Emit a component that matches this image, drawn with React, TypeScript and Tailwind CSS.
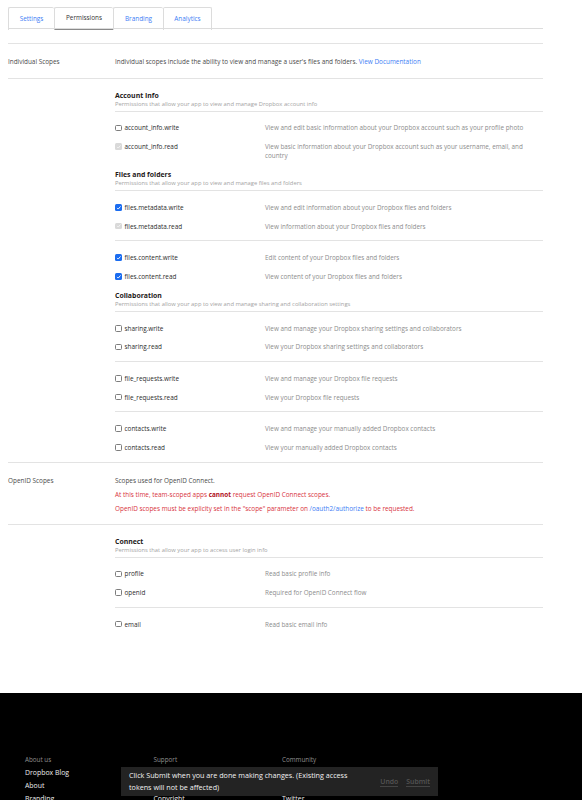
import React from "react";

type Mark = "off" | "on" | "locked";

const groups: {
  title: string;
  sub: string;
  first?: boolean;
  sets: { name: string; desc: string; mark: Mark }[][];
}[] = [
  {
    title: "Account Info",
    sub: "Permissions that allow your app to view and manage Dropbox account info",
    first: true,
    sets: [
      [
        { name: "account_info.write", desc: "View and edit basic information about your Dropbox account such as your profile photo", mark: "off" },
        { name: "account_info.read", desc: "View basic information about your Dropbox account such as your username, email, and country", mark: "locked" },
      ],
    ],
  },
  {
    title: "Files and folders",
    sub: "Permissions that allow your app to view and manage files and folders",
    sets: [
      [
        { name: "files.metadata.write", desc: "View and edit information about your Dropbox files and folders", mark: "on" },
        { name: "files.metadata.read", desc: "View information about your Dropbox files and folders", mark: "locked" },
      ],
      [
        { name: "files.content.write", desc: "Edit content of your Dropbox files and folders", mark: "on" },
        { name: "files.content.read", desc: "View content of your Dropbox files and folders", mark: "on" },
      ],
    ],
  },
  {
    title: "Collaboration",
    sub: "Permissions that allow your app to view and manage sharing and collaboration settings",
    sets: [
      [
        { name: "sharing.write", desc: "View and manage your Dropbox sharing settings and collaborators", mark: "off" },
        { name: "sharing.read", desc: "View your Dropbox sharing settings and collaborators", mark: "off" },
      ],
      [
        { name: "file_requests.write", desc: "View and manage your Dropbox file requests", mark: "off" },
        { name: "file_requests.read", desc: "View your Dropbox file requests", mark: "off" },
      ],
      [
        { name: "contacts.write", desc: "View and manage your manually added Dropbox contacts", mark: "off" },
        { name: "contacts.read", desc: "View your manually added Dropbox contacts", mark: "off" },
      ],
    ],
  },
];

const connect = {
  title: "Connect",
  sub: "Permissions that allow your app to access user login info",
  first: true,
  sets: [
    [
      { name: "profile", desc: "Read basic profile info", mark: "off" as Mark },
      { name: "openid", desc: "Required for OpenID Connect flow", mark: "off" as Mark },
    ],
    [{ name: "email", desc: "Read basic email info", mark: "off" as Mark }],
  ],
};

function Box({ mark }: { mark: Mark }) {
  if (mark === "off") {
    return <span className="w-[6.5px] h-[6.5px] shrink-0 rounded-[1.5px] border-[0.8px] border-[#7d7d7d] bg-white" />;
  }
  const on = mark === "on";
  return (
    <span
      className={
        on
          ? "w-[6.5px] h-[6.5px] shrink-0 rounded-[1.5px] bg-[#1a6cf0] flex items-center justify-center"
          : "w-[6.5px] h-[6.5px] shrink-0 rounded-[1.5px] bg-[#d9d9d9] flex items-center justify-center"
      }
    >
      <svg viewBox="0 0 10 10" className="w-[5.5px] h-[5.5px]">
        <path d="M2 5.3 L4.1 7.4 L8.2 2.6" stroke={on ? "#fff" : "#f4f4f4"} strokeWidth="1.7" fill="none" />
      </svg>
    </span>
  );
}

function Group({ g }: { g: typeof connect }) {
  return (
    <div className={g.first ? "pt-[12px]" : "pt-[0.5px]"}>
      <div className="border-b border-[#e3e3e3] pb-[3px]">
        <div className="text-[6.9px] leading-[10px] font-bold text-[#1e1919]">{g.title}</div>
        <div className="text-[5.8px] leading-[7px] text-[#a3a3a3]">{g.sub}</div>
      </div>
      {g.sets.map((set, i) => {
        const bordered = i < g.sets.length - 1;
        return (
          <div key={i} className={bordered ? "pt-[7px] pb-[5px] border-b border-[#e3e3e3]" : "pt-[7px] pb-[5px]"}>
            {set.map((r) => (
              <div key={r.name} className="flex items-start py-[4.8px] leading-[9px]">
                <div className="w-[150px] shrink-0 flex items-center gap-[3px] h-[9px] text-[6.4px] text-[#2b2b2b]">
                  <Box mark={r.mark} />
                  <span>{r.name}</span>
                </div>
                <div className="w-[272px] text-[6.33px] text-[#8c8c8c]">{r.desc}</div>
              </div>
            ))}
          </div>
        );
      })}
    </div>
  );
}

const tabs = [
  { label: "Settings", w: "w-[46px]", active: false },
  { label: "Permissions", w: "w-[59px]", active: true },
  { label: "Branding", w: "w-[50px]", active: false },
  { label: "Analytics", w: "w-[49px]", active: false },
];

export default function App() {
  return (
    <div className="min-h-[900px] bg-white font-['Open_Sans',sans-serif]">
      <div className="ml-2 w-[535px] pt-[7px]">
        {/* tabs */}
        <div className="flex h-[22px] border-b border-[#dcdcdc]">
          {tabs.map((t, i) => (
            <div
              key={t.label}
              className={
                (t.active
                  ? "border-b-[1.5px] border-b-[#8a8a8a] text-[#333] "
                  : "text-[#3d7df5] ") +
                (i === tabs.length - 1 ? "border-r " : "") +
                t.w +
                " h-[22.5px] border-l border-t border-[#dcdcdc] rounded-t-[2px] flex items-center justify-center text-[6.4px]"
              }
            >
              {t.label}
            </div>
          ))}
        </div>
        <div className="h-[14.5px] border-b border-[#e3e3e3]" />

        {/* individual scopes */}
        <div className="flex pt-[13px] pb-[12px] leading-[9px] text-[6.4px] border-b border-[#e3e3e3]">
          <div className="w-[107px] text-[#4a4a4a]">Individual Scopes</div>
          <div className="text-[#4a4a4a]">
            Individual scopes include the ability to view and manage a user's files and folders.{" "}
            <span className="text-[#3d7df5]">View Documentation</span>
          </div>
        </div>

        <div className="flex border-b border-[#e3e3e3]">
          <div className="w-[107px]" />
          <div className="w-[428px]">
            {groups.map((g) => (
              <Group key={g.title} g={g} />
            ))}
          </div>
        </div>

        {/* openid */}
        <div className="flex pt-[13px] pb-[11px] leading-[9px] text-[6.4px] border-b border-[#e3e3e3]">
          <div className="w-[107px] text-[#4a4a4a]">OpenID Scopes</div>
          <div>
            <p className="text-[#4a4a4a]">Scopes used for OpenID Connect.</p>
            <p className="mt-[5px] text-[#d8323c]">
              At this time, team-scoped apps <span className="font-bold text-[#b0121c]">cannot</span> request OpenID Connect scopes.
            </p>
            <p className="mt-[5px] text-[#d8323c]">
              OpenID scopes must be explicity set in the "scope" parameter on{" "}
              <span className="text-[#3d7df5]">/oauth2/authorize</span> to be requested.
            </p>
          </div>
        </div>

        <div className="flex">
          <div className="w-[107px]" />
          <div className="w-[428px]">
            <Group g={connect} />
          </div>
        </div>
      </div>

      {/* footer */}
      <footer className="mt-[55px] bg-black pt-[62px] pb-[80px] pl-[25px] flex">
        {[
          { h: "About us", items: ["Dropbox Blog", "About", "Branding", "Careers"] },
          { h: "Support", items: ["Help center", "Contact us", "Copyright", "Cookies"] },
          { h: "Community", items: ["Developer Forum", "Blog", "Twitter", "GitHub"] },
        ].map((c) => (
          <div key={c.h} className="w-[128.5px]">
            <div className="text-[6.3px] leading-[9px] text-[#8f8f8f]">{c.h}</div>
            {c.items.map((it) => (
              <div key={it} className="mt-[4px] text-[6.9px] leading-[9px] text-[#ececec]">
                {it}
              </div>
            ))}
          </div>
        ))}
      </footer>

      {/* toast */}
      <div className="fixed left-[121px] bottom-[4px] w-[317px] h-[29px] bg-[#232323] flex items-center pl-[8px] pr-[8px] font-['Open_Sans',sans-serif]">
        <div className="w-[232px] text-[7.2px] leading-[11.5px] text-[#f2f2f2]">
          Click Submit when you are done making changes. (Existing access tokens will not be affected)
        </div>
        <div className="ml-auto flex gap-[8px] text-[6.9px] font-semibold text-[#555]">
          <span className="border-b border-[#444] leading-[9px]">Undo</span>
          <span className="border-b border-[#444] leading-[9px]">Submit</span>
        </div>
      </div>
    </div>
  );
}
